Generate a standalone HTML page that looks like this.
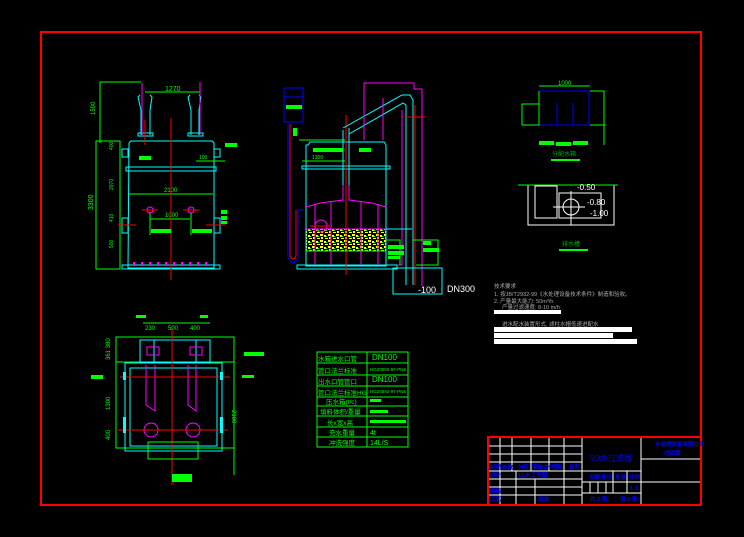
<!DOCTYPE html>
<html><head><meta charset="utf-8"><style>
html,body{margin:0;padding:0;background:#000;width:744px;height:537px;overflow:hidden}
svg{display:block}
text{font-family:"Liberation Sans","Noto Sans CJK SC",sans-serif}
</style></head><body>
<svg width="744" height="537" viewBox="0 0 744 537" xmlns="http://www.w3.org/2000/svg">
<defs>
<pattern id="med" width="8" height="6" patternUnits="userSpaceOnUse">
<rect width="8" height="6" fill="#000"/>
<rect x="0" y="0" width="3" height="2" fill="#ff0"/><rect x="4" y="1" width="2" height="2" fill="#ff0"/><rect x="1" y="3" width="2" height="2" fill="#ff0"/><rect x="5" y="4" width="3" height="1" fill="#ff0"/><rect x="6" y="2" width="1" height="1" fill="#0f0"/>
</pattern>
</defs>
<rect width="744" height="537" fill="#000"/>
<rect x="41" y="32" width="660" height="473" fill="none" stroke="#f00" stroke-width="2"/>

<!-- LEFT ELEVATION -->
<g fill="none" stroke-width="1">
<polyline points="100,143 100,82 141,82" stroke="#0f0"/>
<line x1="145" y1="92" x2="200" y2="92" stroke="#0f0"/>
<text x="165" y="91" fill="#0f0" font-size="7">1270</text>
<text x="95" y="115" fill="#0f0" font-size="6" transform="rotate(-90 95 115)">1590</text>
<rect x="96" y="141" width="24" height="128" stroke="#0f0"/>
<text x="93" y="210" fill="#0f0" font-size="7" transform="rotate(-90 93 210)">3300</text>
<text x="113" y="150" fill="#0f0" font-size="5" transform="rotate(-90 113 150)">400</text>
<text x="113" y="190" fill="#0f0" font-size="5" transform="rotate(-90 113 190)">2070</text>
<text x="113" y="222" fill="#0f0" font-size="5" transform="rotate(-90 113 222)">410</text>
<text x="113" y="248" fill="#0f0" font-size="5" transform="rotate(-90 113 248)">500</text>
<path d="M140,95 L138,97 L141,110 L141,135 M150,95 L152,97 L150,110 L150,135 M199,95 L201,97 L199,110 L199,135 M190,95 L188,97 L191,110 L191,135" stroke="#0ff"/>
<rect x="138" y="133" width="15" height="3" stroke="#0ff"/>
<rect x="188" y="133" width="15" height="3" stroke="#0ff"/>
<line x1="142" y1="83" x2="142" y2="135" stroke="#f0f"/>
<line x1="200" y1="82" x2="200" y2="135" stroke="#f0f"/>
<path d="M129,143 L131,141 L212,141 L214,143 L214,268 L128,268 Z" stroke="#0ff"/>
<rect x="126" y="167" width="90" height="4" stroke="#0ff"/>
<rect x="122" y="265" width="98" height="4" stroke="#0ff"/>
<line x1="129" y1="194" x2="213" y2="194" stroke="#0f0"/>
<text x="164" y="192" fill="#0f0" font-size="6">2100</text>
<line x1="150" y1="219" x2="190" y2="219" stroke="#0f0"/>
<text x="165" y="217" fill="#0f0" font-size="6">1000</text>
<line x1="171" y1="118" x2="171" y2="280" stroke="#f00"/>
<line x1="145" y1="120" x2="145" y2="145" stroke="#f00"/>
<circle cx="150" cy="210" r="3" stroke="#f0f"/><circle cx="191" cy="210" r="3" stroke="#f0f"/>
<line x1="142" y1="210" x2="158" y2="210" stroke="#f00"/><line x1="183" y1="210" x2="199" y2="210" stroke="#f00"/>
<line x1="150" y1="213" x2="150" y2="235" stroke="#0f0"/><line x1="191" y1="213" x2="191" y2="235" stroke="#0f0"/>
<rect x="122" y="218" width="6" height="15" stroke="#0ff"/><rect x="214" y="218" width="6" height="15" stroke="#0ff"/>
<line x1="118" y1="225" x2="136" y2="225" stroke="#f00"/><line x1="206" y1="225" x2="226" y2="225" stroke="#f00"/>
<rect x="214" y="149" width="6" height="8" stroke="#0ff"/><rect x="122" y="149" width="6" height="8" stroke="#0ff"/>
<line x1="196" y1="161" x2="225" y2="161" stroke="#0f0"/><text x="199" y="159" fill="#0f0" font-size="5">100</text>
</g>
<g fill="#0f0">
<rect x="139" y="156" width="12" height="4"/><rect x="225" y="143" width="12" height="4"/>
<rect x="151" y="229" width="20" height="4"/><rect x="192" y="229" width="20" height="4"/>
<rect x="221" y="210" width="6" height="4"/><rect x="221" y="216" width="6" height="4"/><rect x="221" y="221" width="6" height="3"/>
</g>
<g fill="#f0f"><rect x="133" y="262" width="2" height="4"/><rect x="141" y="262" width="2" height="4"/><rect x="149" y="262" width="2" height="4"/><rect x="157" y="262" width="2" height="4"/><rect x="165" y="262" width="2" height="4"/><rect x="173" y="262" width="2" height="4"/><rect x="181" y="262" width="2" height="4"/><rect x="189" y="262" width="2" height="4"/><rect x="197" y="262" width="2" height="4"/><rect x="205" y="262" width="2" height="4"/></g>

<!-- MIDDLE ELEVATION -->
<rect x="306" y="229" width="80" height="23" fill="url(#med)"/>
<g fill="none" stroke-width="1">
<rect x="284" y="88" width="19" height="34" stroke="#00f"/>
<line x1="284" y1="97" x2="303" y2="97" stroke="#00f"/>
<path d="M288,124 L288,258 Q293,268 298,258 L298,210 L303,210" stroke="#00f"/>
<path d="M290,124 L290,256 Q293,262 296,256 L296,210" stroke="#f00"/>
<line x1="299" y1="140" x2="345" y2="140" stroke="#0f0"/>
<path d="M308,145 L310,142 L384,142 L386,145 L386,266 L306,266 L306,145 Z" stroke="#0ff"/>
<rect x="302" y="166" width="88" height="3" stroke="#0ff"/>
<rect x="297" y="265" width="100" height="4" stroke="#0ff"/>
<line x1="302" y1="161" x2="345" y2="161" stroke="#0f0"/><text x="312" y="159" fill="#0f0" font-size="5">1300</text>
<path d="M306,207 L320,203 L343,200 L343,166 M386,207 L372,203 L349,200 L349,166" stroke="#f0f"/>
<path d="M315,204 L315,265 M378,204 L378,265 M331,201 L331,265 M361,201 L361,265" stroke="#f0f"/>
<line x1="346" y1="115" x2="346" y2="275" stroke="#f00"/>
<circle cx="321" cy="226" r="6" stroke="#f0f"/>
<line x1="310" y1="226" x2="332" y2="226" stroke="#f00"/>
<line x1="306" y1="229" x2="386" y2="229" stroke="#f0f"/>
<path d="M343,130 L343,185 M349,128 L349,185" stroke="#0ff"/>
<path d="M343,128 L402,95 L410,95 L413,100 L413,285 M349,134 L403,103 L406,105 L406,285" stroke="#0ff"/>
<path d="M364,140 L364,83 L414,83 L414,89 L422,89 L422,286" stroke="#f0f"/>
<line x1="383" y1="98" x2="383" y2="140" stroke="#f0f"/>
<path d="M402,110 L402,265 L397,265" stroke="#f0f"/>
<line x1="415" y1="105" x2="415" y2="285" stroke="#f00"/>
<line x1="406" y1="117" x2="425" y2="117" stroke="#f00"/>
<rect x="393" y="268" width="49" height="26" stroke="#0ff"/>
<line x1="386" y1="229" x2="412" y2="229" stroke="#0ff"/>
<path d="M386,240 L400,240 L400,265 M413,240 L438,240 L438,265 L416,265" stroke="#0f0"/>
<text x="418" y="293" fill="#fff" font-size="9">-100</text>
<text x="447" y="292" fill="#fff" font-size="9">DN300</text>
</g>
<g fill="#0f0"><rect x="286" y="105" width="16" height="4"/><rect x="313" y="148" width="30" height="4"/><rect x="359" y="148" width="12" height="4"/><rect x="388" y="245" width="16" height="4"/><rect x="388" y="251" width="16" height="4"/><rect x="388" y="256" width="12" height="3"/><rect x="423" y="241" width="8" height="4"/><rect x="423" y="248" width="16" height="4"/><rect x="293" y="128" width="4" height="8"/></g>
<line x1="306" y1="251" x2="386" y2="251" stroke="#0f0"/>

<!-- PLAN -->
<g fill="none" stroke-width="1">
<rect x="116" y="337" width="118" height="111" stroke="#0f0"/>
<line x1="116" y1="362" x2="234" y2="362" stroke="#0f0"/>
<rect x="125" y="363" width="97" height="88" stroke="#0ff"/>
<rect x="130" y="368" width="87" height="78" stroke="#0ff"/>
<rect x="140" y="340" width="70" height="22" stroke="#0ff"/>
<line x1="154" y1="340" x2="154" y2="362" stroke="#0ff"/><line x1="196" y1="340" x2="196" y2="362" stroke="#0ff"/>
<rect x="147" y="347" width="12" height="8" stroke="#f0f"/><rect x="190" y="347" width="12" height="8" stroke="#f0f"/>
<path d="M146,365 L146,405 L155,411 L155,365 M188,365 L188,405 L196,411 L196,365" stroke="#f0f"/>
<circle cx="151" cy="430" r="7" stroke="#f0f"/><circle cx="193" cy="430" r="7" stroke="#f0f"/>
<line x1="172" y1="328" x2="172" y2="485" stroke="#f00"/>
<line x1="120" y1="377" x2="230" y2="377" stroke="#f00"/>
<line x1="118" y1="430" x2="228" y2="430" stroke="#f00"/>
<rect x="148" y="442" width="50" height="17" stroke="#0f0"/>
<line x1="234" y1="337" x2="234" y2="475" stroke="#0f0"/>
<line x1="143" y1="323" x2="210" y2="323" stroke="#0f0"/>
<text x="145" y="330" fill="#0f0" font-size="6">230</text><text x="168" y="330" fill="#0f0" font-size="6">500</text><text x="190" y="330" fill="#0f0" font-size="6">400</text>
<text x="110" y="360" fill="#0f0" font-size="6" transform="rotate(-90 110 360)">361 380</text>
<text x="110" y="410" fill="#0f0" font-size="6" transform="rotate(-90 110 410)">1300</text>
<text x="110" y="440" fill="#0f0" font-size="6" transform="rotate(-90 110 440)">400</text>
<text x="232" y="410" fill="#0f0" font-size="6" transform="rotate(90 232 410)">2100</text>
</g>
<g fill="#0f0"><rect x="136" y="315" width="10" height="3"/><rect x="200" y="315" width="8" height="3"/><rect x="244" y="352" width="20" height="4"/><rect x="91" y="375" width="12" height="4"/><rect x="242" y="375" width="12" height="3"/><rect x="172" y="474" width="20" height="8"/></g>
<g fill="#0ff"><rect x="123" y="417" width="3" height="16"/><rect x="220" y="417" width="3" height="16"/><rect x="123" y="372" width="3" height="8"/><rect x="220" y="372" width="3" height="8"/></g>

<!-- TABLE -->
<g stroke="#0f0" fill="none">
<rect x="317" y="352" width="91" height="95"/>
<line x1="367" y1="352" x2="367" y2="447"/>
<line x1="317" y1="363" x2="408" y2="363"/><line x1="317" y1="375" x2="408" y2="375"/><line x1="317" y1="386" x2="408" y2="386"/><line x1="317" y1="397" x2="408" y2="397"/><line x1="317" y1="406" x2="408" y2="406"/><line x1="317" y1="416" x2="408" y2="416"/><line x1="317" y1="427" x2="408" y2="427"/><line x1="317" y1="437" x2="408" y2="437"/>
</g>
<g fill="#0f0" font-size="6.5">
<text x="318" y="361">水箱进水口管</text><text x="318" y="373">管口法兰标准</text><text x="318" y="384">出水口管管口</text><text x="318" y="395">管口法兰标准HG</text><text x="326" y="404">压水箱(t/c)</text><text x="320" y="414">填料体积/重量</text><text x="327" y="425">长x宽x高</text><text x="329" y="435">充水重量</text><text x="329" y="445">冲洗强度</text>
<text x="372" y="360" font-size="8">DN100</text><text x="370" y="371" font-size="4.5">HG20592-97-PN6</text><text x="372" y="382" font-size="8">DN100</text><text x="370" y="393" font-size="4.5">HG20592-97-PN6</text><rect x="370" y="399" width="11" height="3"/><rect x="370" y="410" width="18" height="3"/><rect x="370" y="420" width="36" height="3"/><text x="370" y="435" font-size="7">4t</text><text x="370" y="445" font-size="7">14L/S</text>
</g>

<!-- RIGHT TOP -->
<g fill="none">
<line x1="539" y1="86" x2="590" y2="86" stroke="#0f0"/><text x="558" y="85" fill="#0f0" font-size="6">1000</text>
<rect x="539" y="91" width="50" height="34" stroke="#00f"/>
<line x1="539" y1="91" x2="539" y2="125" stroke="#0f0"/>
<line x1="557" y1="103" x2="557" y2="125" stroke="#00f"/><line x1="573" y1="103" x2="573" y2="125" stroke="#00f"/>
<polyline points="539,104 522,104 522,125 539,125" stroke="#0f0"/>
<polyline points="590,91 604,91 604,145" stroke="#0f0"/>
<line x1="590" y1="125" x2="605" y2="125" stroke="#0f0"/>
<rect x="528" y="185" width="86" height="40" stroke="#fff"/>
<line x1="518" y1="185" x2="618" y2="185" stroke="#0f0"/>
<rect x="535" y="186" width="22" height="32" stroke="#fff"/><rect x="559" y="193" width="42" height="25" stroke="#fff"/>
<circle cx="571" cy="207" r="8" stroke="#fff"/>
<line x1="571" y1="191" x2="571" y2="225" stroke="#fff"/><line x1="553" y1="207" x2="585" y2="207" stroke="#fff"/>
<text x="577" y="190" fill="#fff" font-size="8">-0.50</text><text x="587" y="205" fill="#fff" font-size="8">-0.80</text><text x="590" y="216" fill="#fff" font-size="8">-1.00</text>
</g>
<g fill="#0f0"><rect x="539" y="141" width="15" height="4"/><rect x="556" y="142" width="15" height="4"/><rect x="573" y="141" width="15" height="4"/><rect x="551" y="159" width="29" height="2"/><rect x="559" y="249" width="29" height="2"/></g>
<text x="552" y="156" fill="#0a0" font-size="6" font-family="Noto Sans CJK SC">分配水箱</text>
<text x="562" y="246" fill="#0a0" font-size="6" font-family="Noto Sans CJK SC">排水槽</text>
<g fill="#aaa" font-size="5.5" font-family="Noto Sans CJK SC">
<text x="494" y="288">技术要求</text>
<text x="494" y="296">1. 按JB/T2932-99《水处理设备技术条件》制造和验收。</text>
<text x="494" y="303">2. 产量最大能力: 50m³/h</text>
<text x="502" y="309">产量过滤速度: 8-10 m/h</text>
<text x="502" y="326">进水配水装置形式, 滤柱水帽低速进配水</text>
</g>
<g fill="#fff"><rect x="494" y="310" width="67" height="4"/><rect x="494" y="327" width="138" height="5"/><rect x="494" y="333" width="119" height="5"/><rect x="494" y="339" width="143" height="5"/></g>

<!-- TITLE BLOCK -->
<g stroke="#fff" fill="none">
<line x1="500" y1="437" x2="500" y2="505"/><line x1="512" y1="437" x2="512" y2="471"/><line x1="531" y1="437" x2="531" y2="471"/><line x1="549" y1="437" x2="549" y2="471"/><line x1="564" y1="437" x2="564" y2="505"/><line x1="582" y1="437" x2="582" y2="505"/><line x1="641" y1="437" x2="641" y2="505"/>
<line x1="516" y1="471" x2="516" y2="505"/><line x1="535" y1="479" x2="535" y2="505"/>
<line x1="488" y1="446" x2="582" y2="446"/><line x1="488" y1="454" x2="582" y2="454"/><line x1="488" y1="462" x2="582" y2="462"/><line x1="488" y1="471" x2="582" y2="471"/><line x1="488" y1="479" x2="582" y2="479"/><line x1="488" y1="487" x2="582" y2="487"/><line x1="488" y1="495" x2="582" y2="495"/>
<line x1="641" y1="459" x2="701" y2="459"/><line x1="641" y1="482" x2="701" y2="482"/>
<line x1="582" y1="471" x2="641" y2="471"/><line x1="582" y1="493" x2="641" y2="493"/><line x1="582" y1="482" x2="641" y2="482"/>
<line x1="613" y1="471" x2="613" y2="493"/><line x1="627" y1="471" x2="627" y2="493"/>
<line x1="590" y1="482" x2="590" y2="493"/><line x1="598" y1="482" x2="598" y2="493"/><line x1="606" y1="482" x2="606" y2="493"/>
</g>
<rect x="488" y="437" width="213" height="68" fill="none" stroke="#f00" stroke-width="2"/>
<g fill="#00f" font-size="5.5" font-weight="bold" font-family="Noto Sans CJK SC">
<text x="490" y="469">标记</text><text x="502" y="469">处数</text><text x="518" y="469">分区</text><text x="532" y="469">更改文件号</text><text x="552" y="469">签名</text><text x="569" y="469">日期</text>
<text x="490" y="477">设计</text><text x="516" y="477">-10-9-工艺图</text><text x="490" y="493">审核</text><text x="490" y="501">工艺</text><text x="538" y="501">批准</text>
<text x="590" y="461" font-size="8" font-weight="normal">50t/h过滤器</text>
<text x="590" y="479">阶段标记</text><text x="615" y="479">重量</text><text x="629" y="479">比例</text><text x="630" y="490">1:1</text>
<text x="590" y="501">共 1 张</text><text x="620" y="501">第 1 张</text>
<text x="655" y="446">水处理设备有限公司</text><text x="664" y="455">过滤器</text>
</g>
</svg>
</body></html>
